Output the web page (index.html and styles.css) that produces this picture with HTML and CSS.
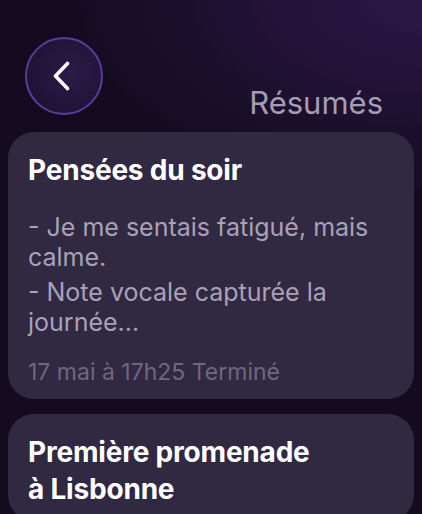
FILE: index.html
```html
<!DOCTYPE html>
<html lang="fr">
<head>
<meta charset="utf-8">
<title>Résumés</title>
<link rel="stylesheet" href="styles.css">
</head>
<body>
<div class="screen">
  <header class="topbar">
    <button class="back" aria-label="Retour">
      <svg width="20" height="30" viewBox="0 0 20 30" fill="none">
        <path d="M15.5 2.5 L3.5 15 L15.5 27.5" stroke="#ffffff" stroke-width="3.6" stroke-linecap="round" stroke-linejoin="round"/>
      </svg>
    </button>
    <h1 class="page-title">Résumés</h1>
  </header>
  <main class="list">
    <article class="card">
      <h2 class="card-title">Pensées du soir</h2>
      <div class="card-body">
        <p>- Je me sentais fatigué, mais calme.</p>
        <p>- Note vocale capturée la journée...</p>
      </div>
      <p class="card-meta">17 mai à 17h25 Terminé</p>
    </article>
    <article class="card">
      <h2 class="card-title">Première promenade à Lisbonne</h2>
    </article>
  </main>
</div>
</body>
</html>
```

FILE: styles.css
```css
html, body {
  margin: 0;
  padding: 0;
  height: 100%;
}

body {
  background: #140b20;
  font-family: Inter, "Noto Sans", "DejaVu Sans", sans-serif;
  overflow: hidden;
}

.screen {
  min-height: 514px;
  background:
    radial-gradient(ellipse 360px 200px at 100% 0%, rgba(60, 32, 96, 0.6), rgba(60, 32, 96, 0) 100%),
    linear-gradient(180deg, #140b21 0%, #140b1f 100%);
}

.topbar {
  display: flex;
  justify-content: space-between;
  align-items: flex-end;
  padding: 37px 39px 0 25px;
}

.back {
  width: 78px;
  height: 78px;
  box-sizing: border-box;
  border-radius: 50%;
  border: 2.5px solid #5c3b9c;
  background: radial-gradient(circle at 60% 45%, #2b1a48 0%, #1f1334 75%);
  display: flex;
  align-items: center;
  justify-content: center;
  padding: 0 5px 0 0;
  margin: 0;
  cursor: pointer;
}

.back svg {
  display: block;
}

.page-title {
  margin: 0 0 -3px 0;
  font-size: 31px;
  line-height: 1;
  font-weight: 400;
  color: #a49db3;
}

.list {
  display: flex;
  flex-direction: column;
  gap: 15px;
  padding: 17px 8px 0 8px;
}

.card {
  background: #312842;
  border-radius: 26px;
  padding: 20px 20px 13px 20px;
}

.card-title {
  margin: 0;
  font-size: 28px;
  line-height: 37px;
  font-weight: 700;
  color: #ffffff;
  max-width: 300px;
  letter-spacing: -0.2px;
}

.card-body {
  margin: 23px 0 0 0;
  display: flex;
  flex-direction: column;
  gap: 5px;
}

.card-body p {
  margin: 0;
  font-size: 25px;
  line-height: 30px;
  font-weight: 400;
  color: #a9a1b9;
}

.card-meta {
  margin: 21px 0 0 0;
  font-size: 23px;
  line-height: 28px;
  font-weight: 400;
  color: #6f6781;
}
```
